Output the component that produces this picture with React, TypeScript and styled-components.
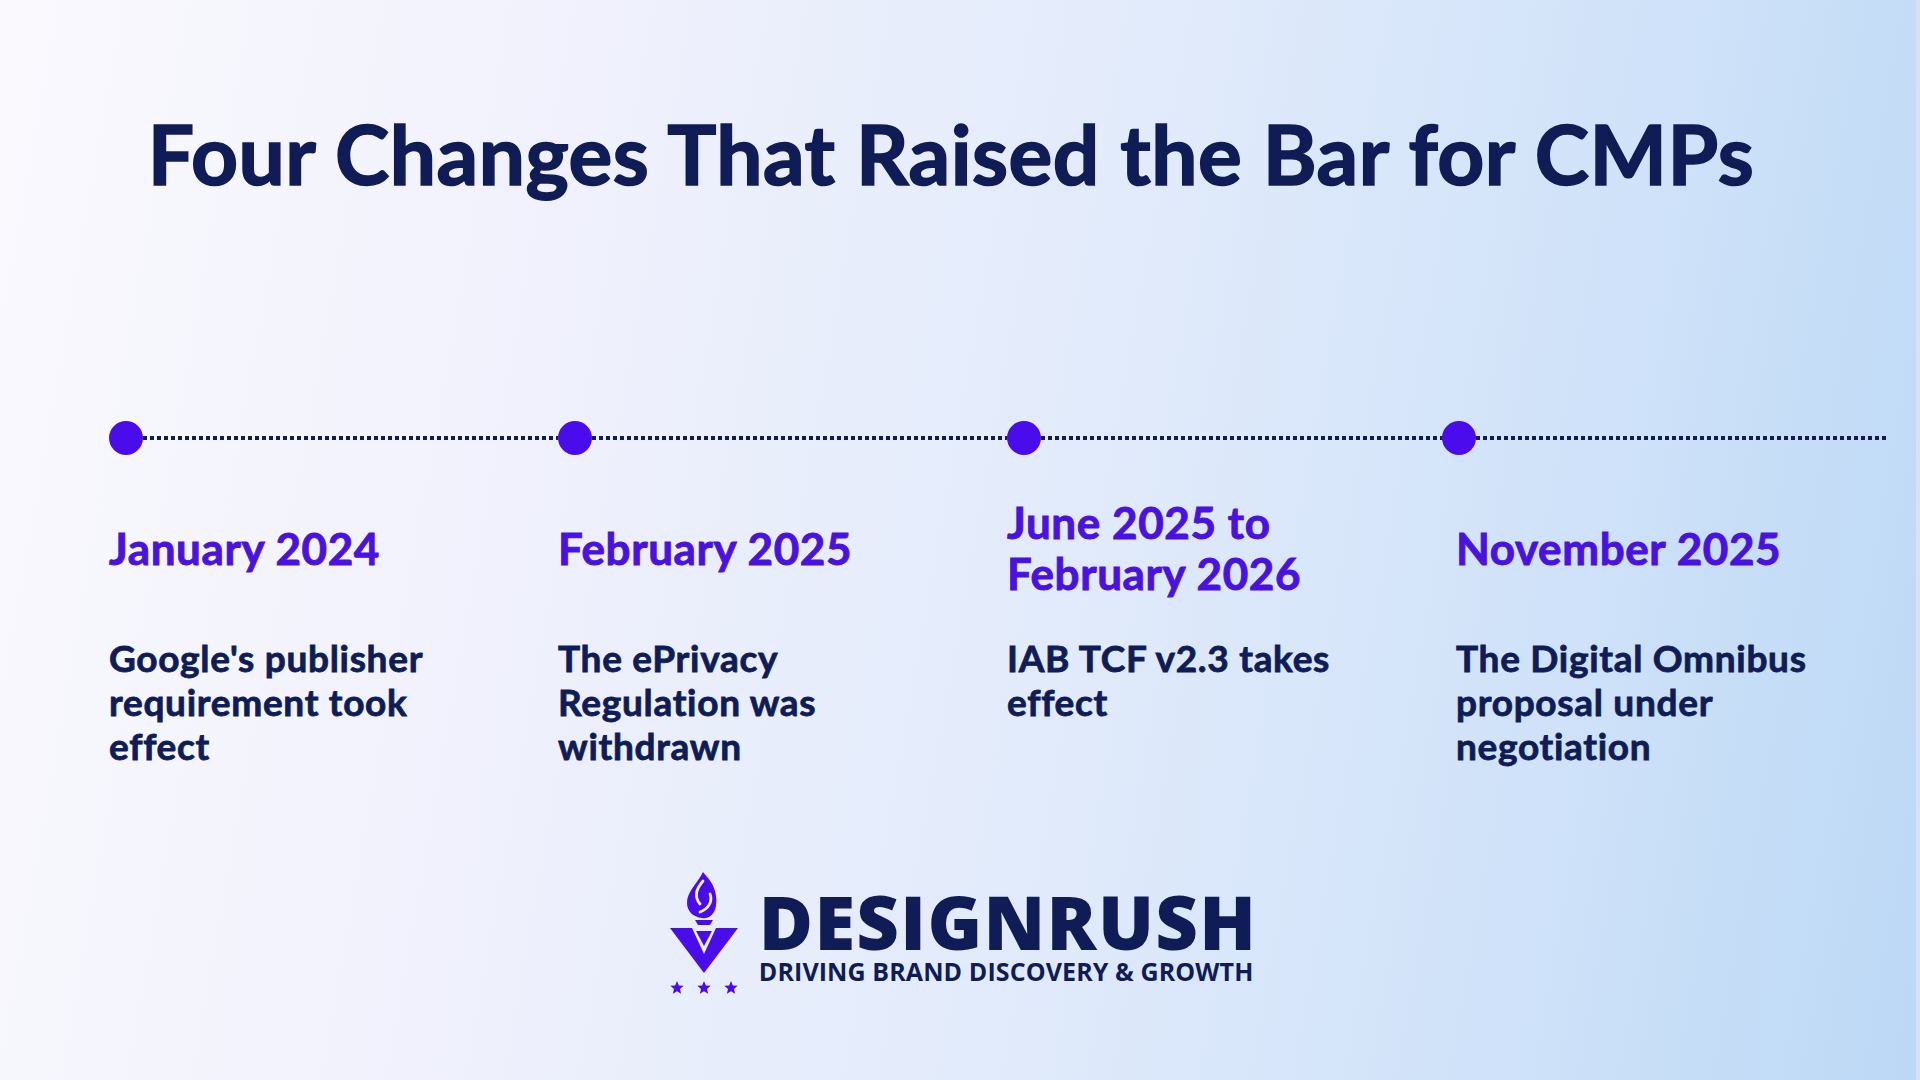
import React from "react";
import styled, { createGlobalStyle } from "styled-components";

const GlobalStyle = createGlobalStyle`
  html, body {
    margin: 0;
    padding: 0;
  }
  body {
    font-family: "Lato", "Noto Sans", sans-serif;
  }
`;

const NAVY = "#0f1c55";
const PURPLE = "#4a12e0";
const DOT = "#4a0ceb";

const Page = styled.main`
  width: 1920px;
  height: 1080px;
  box-sizing: border-box;
  overflow: hidden;
  display: flex;
  flex-direction: column;
  align-items: stretch;
  background: linear-gradient(
    100deg,
    #faf9fe 0%,
    #f0f1fc 28%,
    #e2ebfb 55%,
    #cfe2f9 80%,
    #bcd8f5 100%
  );
  border-right: 4px solid #d6e2f1;
`;

const Title = styled.h1`
  margin: 112px 0 0;
  padding-right: 14px;
  text-align: center;
  font-family: "Lato", sans-serif;
  font-weight: 700;
  font-size: 82px;
  line-height: 82px;
  letter-spacing: 0.5px;
  color: ${NAVY};
  -webkit-text-stroke: 1.6px ${NAVY};
`;

const Timeline = styled.section`
  margin-top: 227px;
  padding: 0 29px 0 109px;
  display: grid;
  grid-template-columns: 449px 449px 449px 1fr;
`;

const Column = styled.div`
  display: flex;
  flex-direction: column;
`;

const Track = styled.div<{ $shift: number }>`
  display: flex;
  align-items: center;
  height: 34px;
  margin-left: ${(p) => p.$shift}px;
`;

const Dot = styled.span`
  flex: none;
  width: 34px;
  height: 34px;
  border-radius: 50%;
  background: ${DOT};
`;

const Dotted = styled.span`
  flex: 1;
  height: 4px;
  background-image: repeating-linear-gradient(
    to right,
    #141c48 0 4px,
    transparent 4px 7px
  );
`;

const DateBox = styled.div`
  margin-top: 42px;
  height: 102px;
  display: flex;
  align-items: center;
`;

const DateText = styled.h2`
  margin: 0;
  font-family: "Lato", sans-serif;
  font-weight: 700;
  font-size: 44px;
  line-height: 51px;
  letter-spacing: 0.6px;
  color: ${PURPLE};
  -webkit-text-stroke: 0.9px ${PURPLE};
  white-space: nowrap;
`;

const Body = styled.p`
  margin: 37px 0 0;
  font-family: "Lato", sans-serif;
  font-weight: 700;
  font-size: 37px;
  line-height: 44px;
  letter-spacing: 0.7px;
  color: ${NAVY};
  -webkit-text-stroke: 0.8px ${NAVY};
  white-space: nowrap;
`;

const Brand = styled.footer`
  margin-top: 98px;
  display: flex;
  justify-content: center;
  align-items: flex-start;
  gap: 10px;
`;

const BrandText = styled.div`
  margin-top: 19px;
  display: flex;
  flex-direction: column;
  color: ${NAVY};
  font-family: "Open Sans", sans-serif;
`;

const BrandName = styled.div`
  font-weight: 800;
  font-size: 74px;
  line-height: 74px;
  letter-spacing: 1.3px;
`;

const Tagline = styled.div`
  font-weight: 700;
  font-size: 25px;
  line-height: 25px;
  letter-spacing: 0.1px;
`;

const starPoints = (cx: number, cy: number, r: number) => {
  const pts: string[] = [];
  for (let i = 0; i < 10; i++) {
    const rad = i % 2 === 0 ? r : r * 0.45;
    const a = -Math.PI / 2 + (i * Math.PI) / 5;
    pts.push(`${(cx + rad * Math.cos(a)).toFixed(2)},${(cy + rad * Math.sin(a)).toFixed(2)}`);
  }
  return pts.join(" ");
};

const Logo = () => (
  <svg width="90" height="130" viewBox="0 0 90 130" aria-hidden="true">
    <path
      d="M44 6 C49 12 54 17 56 25 C58 32 58 40 55 46 C52 51 47 53 43 52 C34 51 28 45 28 37 C28 29 33 23 37 17 C40 13 42 10 44 6 Z"
      fill={DOT}
    />
    <path d="M44 15 C37 23 35 31 41 38" stroke="#eef1fc" strokeWidth="2.8" fill="none" strokeLinecap="round" />
    <path d="M51 28 C54 36 49 43 41 46" stroke="#eef1fc" strokeWidth="2.8" fill="none" strokeLinecap="round" />
    <polygon points="36,54 54,54 51,59 39,59" fill={DOT} />
    <polygon points="11,62 33,62 45,88 57,62 79,62 45,107" fill={DOT} />
    <polygon points="37,65 53,65 45,80" fill={DOT} />
    <polygon points={starPoints(18, 122, 7)} fill={DOT} />
    <polygon points={starPoints(45, 122, 7)} fill={DOT} />
    <polygon points={starPoints(72, 122, 7)} fill={DOT} />
  </svg>
);

type Item = { date: string[]; body: string[]; shift?: number };

const items: Item[] = [
  { date: ["January 2024"], body: ["Google's publisher", "requirement took", "effect"] },
  { date: ["February 2025"], body: ["The ePrivacy", "Regulation was", "withdrawn"] },
  { date: ["June 2025 to", "February 2026"], body: ["IAB TCF v2.3 takes", "effect"] },
  { date: ["November 2025"], body: ["The Digital Omnibus", "proposal under", "negotiation"], shift: -14 },
];

const Lines = ({ lines }: { lines: string[] }) => (
  <>
    {lines.map((l, i) => (
      <React.Fragment key={i}>
        {i > 0 && <br />}
        {l}
      </React.Fragment>
    ))}
  </>
);

export default function App() {
  return (
    <>
      <GlobalStyle />
      <Page>
        <Title>Four Changes That Raised the Bar for CMPs</Title>
        <Timeline>
          {items.map((it, i) => (
            <Column key={i}>
              <Track $shift={it.shift ?? 0}>
                <Dot />
                <Dotted />
              </Track>
              <DateBox>
                <DateText>
                  <Lines lines={it.date} />
                </DateText>
              </DateBox>
              <Body>
                <Lines lines={it.body} />
              </Body>
            </Column>
          ))}
        </Timeline>
        <Brand>
          <Logo />
          <BrandText>
            <BrandName>DESIGNRUSH</BrandName>
            <Tagline>DRIVING BRAND DISCOVERY &amp; GROWTH</Tagline>
          </BrandText>
        </Brand>
      </Page>
    </>
  );
}
